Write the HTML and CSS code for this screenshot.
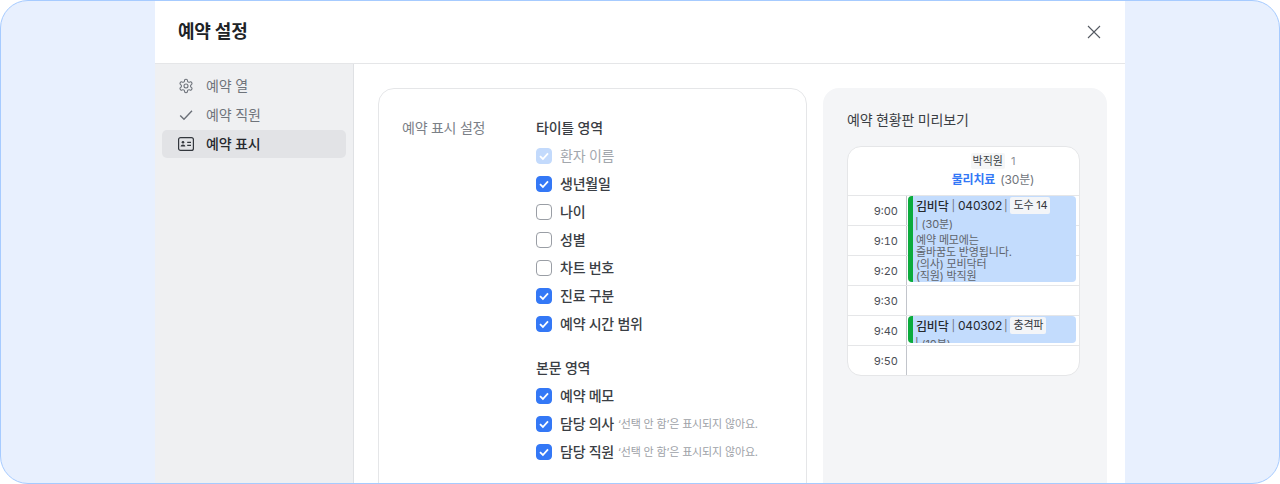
FILE: index.html
```html
<!DOCTYPE html>
<html lang="ko">
<head>
<meta charset="utf-8">
<title>예약 설정</title>
<link rel="stylesheet" href="styles.css">
</head>
<body>
<div class="frame">
  <section class="modal">
    <header class="modal-head">
      <h1 class="modal-title">예약 설정</h1>
      <svg class="close" width="16" height="16" viewBox="0 0 16 16" fill="none" stroke="#555a62" stroke-width="1.1"><path d="M2 2 14 14M14 2 2 14"/></svg>
    </header>
    <div class="modal-body">
      <nav class="side">
        <div class="side-item">
          <svg width="16" height="16" viewBox="0 0 24 24" fill="none" stroke="#6b7078" stroke-width="1.6" stroke-linejoin="round"><path d="M12.22 2h-.44a2 2 0 0 0-2 2v.18a2 2 0 0 1-1 1.73l-.43.25a2 2 0 0 1-2 0l-.15-.08a2 2 0 0 0-2.73.73l-.22.38a2 2 0 0 0 .73 2.73l.15.1a2 2 0 0 1 1 1.72v.51a2 2 0 0 1-1 1.74l-.15.09a2 2 0 0 0-.73 2.73l.22.38a2 2 0 0 0 2.73.73l.15-.08a2 2 0 0 1 2 0l.43.25a2 2 0 0 1 1 1.73V20a2 2 0 0 0 2 2h.44a2 2 0 0 0 2-2v-.18a2 2 0 0 1 1-1.73l.43-.25a2 2 0 0 1 2 0l.15.08a2 2 0 0 0 2.73-.73l.22-.39a2 2 0 0 0-.73-2.73l-.15-.08a2 2 0 0 1-1-1.74v-.5a2 2 0 0 1 1-1.74l.15-.09a2 2 0 0 0 .73-2.73l-.22-.38a2 2 0 0 0-2.73-.73l-.15.08a2 2 0 0 1-2 0l-.43-.25a2 2 0 0 1-1-1.73V4a2 2 0 0 0-2-2z"/><circle cx="12" cy="12" r="3"/></svg>
          <span>예약 열</span>
        </div>
        <div class="side-item">
          <svg width="16" height="16" viewBox="0 0 16 16" fill="none" stroke="#6b7078" stroke-width="1.4"><path d="M2.2 8.4 6 12.2 14 3.8"/></svg>
          <span>예약 직원</span>
        </div>
        <div class="side-item active">
          <svg width="16" height="16" viewBox="0 0 16 16" fill="none" stroke="#33373d" stroke-width="1.2"><rect x="0.6" y="1.6" width="14.8" height="12.8" rx="2"/><circle cx="5" cy="6.2" r="1.3" fill="#33373d" stroke="none"/><path d="M2.6 10.6c.2-1.5 1.1-2.2 2.4-2.2s2.2.7 2.4 2.2z" fill="#33373d" stroke="none"/><path d="M9.2 6.4h3.8M9.2 9.4h3.8"/></svg>
          <span>예약 표시</span>
        </div>
      </nav>
      <main class="content">
        <section class="settings">
          <div class="settings-label">예약 표시 설정</div>
          <div class="settings-options">
            <div class="group-title">타이틀 영역</div>
            <label class="opt disabled"><span class="box on"><svg width="12" height="12" viewBox="0 0 12 12" fill="none" stroke="#fff" stroke-width="1.8"><path d="M2 6.2 4.9 9 10 3.4"/></svg></span><span>환자 이름</span></label>
            <label class="opt"><span class="box on"><svg width="12" height="12" viewBox="0 0 12 12" fill="none" stroke="#fff" stroke-width="1.8"><path d="M2 6.2 4.9 9 10 3.4"/></svg></span><span>생년월일</span></label>
            <label class="opt"><span class="box"></span><span>나이</span></label>
            <label class="opt"><span class="box"></span><span>성별</span></label>
            <label class="opt"><span class="box"></span><span>차트 번호</span></label>
            <label class="opt"><span class="box on"><svg width="12" height="12" viewBox="0 0 12 12" fill="none" stroke="#fff" stroke-width="1.8"><path d="M2 6.2 4.9 9 10 3.4"/></svg></span><span>진료 구분</span></label>
            <label class="opt"><span class="box on"><svg width="12" height="12" viewBox="0 0 12 12" fill="none" stroke="#fff" stroke-width="1.8"><path d="M2 6.2 4.9 9 10 3.4"/></svg></span><span>예약 시간 범위</span></label>
            <div class="group-title second">본문 영역</div>
            <label class="opt"><span class="box on"><svg width="12" height="12" viewBox="0 0 12 12" fill="none" stroke="#fff" stroke-width="1.8"><path d="M2 6.2 4.9 9 10 3.4"/></svg></span><span>예약 메모</span></label>
            <label class="opt"><span class="box on"><svg width="12" height="12" viewBox="0 0 12 12" fill="none" stroke="#fff" stroke-width="1.8"><path d="M2 6.2 4.9 9 10 3.4"/></svg></span><span>담당 의사</span><small class="hint">‘선택 안 함’은 표시되지 않아요.</small></label>
            <label class="opt"><span class="box on"><svg width="12" height="12" viewBox="0 0 12 12" fill="none" stroke="#fff" stroke-width="1.8"><path d="M2 6.2 4.9 9 10 3.4"/></svg></span><span>담당 직원</span><small class="hint">‘선택 안 함’은 표시되지 않아요.</small></label>
          </div>
        </section>
        <aside class="preview">
          <div class="preview-title">예약 현황판 미리보기</div>
          <div class="board">
            <div class="board-head">
              <div class="staff"><span class="staff-name">박직원</span><span class="staff-count">1</span></div>
              <div class="treat"><b>물리치료</b><span>(30분)</span></div>
            </div>
            <div class="grid">
              <div class="row"><div class="time">9:00</div><div class="slot"></div></div>
              <div class="row"><div class="time">9:10</div><div class="slot"></div></div>
              <div class="row"><div class="time">9:20</div><div class="slot"></div></div>
              <div class="row"><div class="time">9:30</div><div class="slot"></div></div>
              <div class="row"><div class="time">9:40</div><div class="slot"></div></div>
              <div class="row"><div class="time">9:50</div><div class="slot"></div></div>
              <div class="event event-long">
                <div class="event-line"><b>김비닥</b><i>|</i><span>040302</span><i>|</i><em>도수 14</em></div>
                <div class="event-sub">| (30분)</div>
                <div class="event-memo">예약 메모에는<br>줄바꿈도 반영됩니다.<br>(의사) 모비닥터<br>(직원) 박직원</div>
              </div>
              <div class="event event-short">
                <div class="event-line"><b>김비닥</b><i>|</i><span>040302</span><i>|</i><em>충격파</em></div>
                <div class="event-sub">| (10분)</div>
              </div>
            </div>
          </div>
        </aside>
      </main>
    </div>
  </section>
</div>
</body>
</html>
```
FILE: styles.css
```css
* { box-sizing: border-box; }
html, body { margin: 0; height: 100%; background: #fff; }
body {
  font-family: Inter, "Noto Sans CJK KR", sans-serif;
  color: #26292e;
  overflow: hidden;
}
.frame {
  width: 1280px;
  height: 484px;
  background: #e8f0fe;
  border: 1px solid #a6cbff;
  border-radius: 28px;
  overflow: hidden;
  display: flex;
  justify-content: center;
}
.modal {
  width: 970px;
  height: 483px;
  margin-top: -1px;
  background: #fff;
  display: flex;
  flex-direction: column;
  flex: none;
}
.modal-head {
  height: 64px;
  flex: none;
  border-bottom: 1px solid #e5e6e8;
  display: flex;
  align-items: center;
  justify-content: space-between;
  padding: 0 23px;
}
.modal-title { margin: 0; font-size: 18px; font-weight: 700; color: #202327; line-height: 24px; letter-spacing: -0.2px; }
.close { margin-top: 1px; }
.modal-body { flex: 1; display: flex; min-height: 0; }
.side {
  width: 199px;
  flex: none;
  background: #eff0f2;
  border-right: 1px solid #dfe1e4;
  padding: 8px 7px;
  display: flex;
  flex-direction: column;
  gap: 1px;
}
.side-item {
  height: 28px;
  border-radius: 5px;
  padding: 0 16px;
  display: flex;
  align-items: center;
  gap: 12px;
  font-size: 14px;
  letter-spacing: -0.15px;
  color: #6f747b;
}
.side-item span { padding-bottom: 2px; }
.side-item.active { background: #e2e3e6; color: #26292e; font-weight: 500; }
.content {
  flex: 1;
  min-width: 0;
  padding: 24px 18px 0 24px;
  display: flex;
  gap: 16px;
  overflow: hidden;
}
.settings {
  width: 429px;
  flex: none;
  height: 420px;
  border: 1px solid #e5e6e8;
  border-radius: 16px;
  padding: 28px 23px 0;
  display: flex;
}
.settings-label {
  width: 134px;
  flex: none;
  font-size: 14px;
  line-height: 22px;
  letter-spacing: -0.25px;
  color: #7b8087;
}
.settings-options { display: flex; flex-direction: column; }
.group-title { font-size: 14px; line-height: 22px; font-weight: 500; color: #3a3e44; margin-bottom: 3px; letter-spacing: -0.2px; }
.group-title.second { margin-top: 19px; }
.opt {
  height: 28px;
  padding-bottom: 2px;
  display: flex;
  align-items: center;
  font-size: 14px;
  font-weight: 500;
  letter-spacing: -0.25px;
  color: #3a3e44;
  gap: 8px;
}
.opt.disabled { color: #a3a7ad; font-weight: 400; }
.box {
  width: 16px;
  height: 16px;
  margin-top: 2px;
  border: 1px solid #9a9ea5;
  border-radius: 4px;
  background: #fff;
  display: flex;
  align-items: center;
  justify-content: center;
  flex: none;
}
.box.on { background: #3478f6; border-color: #3478f6; }
.opt.disabled .box.on { background: #c3dafc; border-color: #c3dafc; }
.hint { font-size: 11px; font-weight: 400; color: #9da1a7; margin-left: -4px; letter-spacing: -0.15px; }
.preview {
  width: 284px;
  flex: none;
  height: 420px;
  background: #f4f5f7;
  border-radius: 16px;
  padding: 21px 24px 0;
}
.preview-title { font-size: 14px; line-height: 21px; color: #3a3e44; margin-bottom: 16px; letter-spacing: -0.2px; }
.board {
  width: 233px;
  height: 230px;
  background: #fff;
  border: 1px solid #e5e6e8;
  border-radius: 14px;
  overflow: hidden;
}
.board-head { height: 49px; border-bottom: 1px solid #e5e6e8; padding: 5px 0 0 59px; text-align: center; }
.staff { height: 18px; display: flex; justify-content: center; align-items: center; gap: 6px; font-size: 11px; }
.staff-name { background: #f5f6f7; border-radius: 2px; padding: 0 2px; color: #3a3e44; line-height: 16px; }
.staff-count { color: #8b9096; }
.treat { font-size: 12px; line-height: 20px; display: flex; justify-content: center; gap: 5px; color: #6f747b; letter-spacing: -0.15px; }
.treat b { color: #3478f6; font-weight: 700; }
.grid { position: relative; }
.row { height: 30px; display: flex; border-bottom: 1px solid #e5e6e8; }
.row:last-of-type { border-bottom: 0; }
.time { width: 59px; flex: none; border-right: 1px solid #c2c5cb; text-align: right; padding: 5px 8px 0 0; font-size: 11px; line-height: 20px; color: #4a4e55; font-variant-numeric: tabular-nums; }
.slot { flex: 1; }
.event {
  position: absolute;
  left: 60px;
  width: 168px;
  background: #c3dcfd;
  border-left: 5px solid #0bab3c;
  border-radius: 4px;
  padding: 0 0 0 3px;
  overflow: hidden;
  font-size: 12px;
  color: #5f646b;
}
.event-long { top: 0; height: 86px; }
.event-short { top: 120px; height: 27px; }
.event-line { display: flex; align-items: center; height: 19px; gap: 3px; color: #26292e; white-space: nowrap; font-size: 12px; letter-spacing: -0.2px; }
.event-line b { font-weight: 500; }
.event-line i { font-style: normal; color: #6f747b; font-size: 11px; }
.event-line span + i { margin-left: -1px; }
.event-line em { font-style: normal; background: #f3f5f8; border-radius: 2px; padding: 0 3px; font-size: 11px; line-height: 17px; color: #33373d; }
.event-sub { font-size: 11px; line-height: 16px; margin-top: 1px; margin-left: -1px; letter-spacing: -0.1px; }
.event-memo { font-size: 11px; line-height: 12px; margin-top: 2px; white-space: nowrap; letter-spacing: -0.15px; }
```
